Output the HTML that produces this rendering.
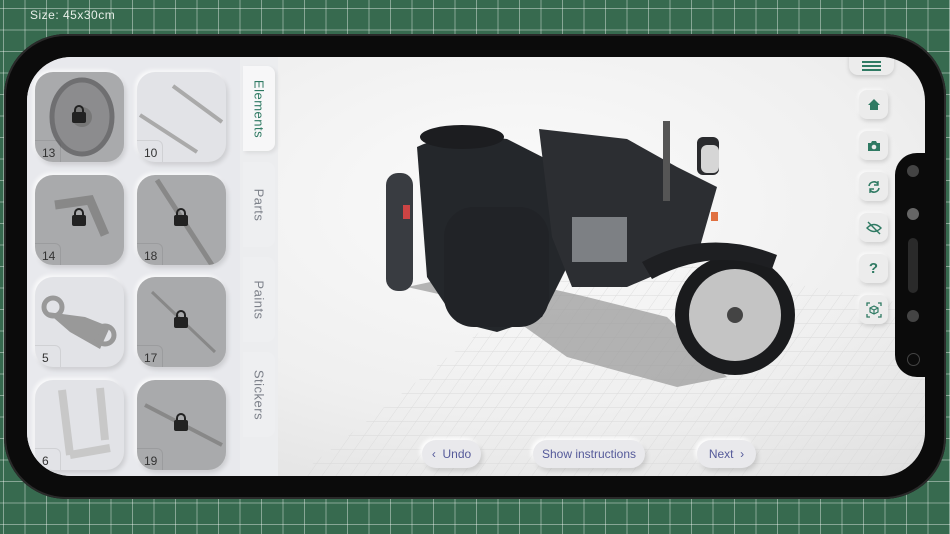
<!DOCTYPE html>
<html><head><style>
*{margin:0;padding:0;box-sizing:border-box}
body{width:950px;height:534px;overflow:hidden;position:relative;font-family:"Liberation Sans",sans-serif;
background-color:#376a4f;
background-image:linear-gradient(rgba(255,255,255,.4) 1px,transparent 1px),linear-gradient(90deg,rgba(255,255,255,.4) 1px,transparent 1px);
background-size:21.5px 21.5px;background-position:3px 8px}
.size{position:absolute;left:30px;top:8px;color:#e8efe9;font-size:12px;letter-spacing:.5px}
.phone{position:absolute;left:4px;top:34px;width:942px;height:465px;background:#0b0b0b;border-radius:62px;box-shadow:0 0 0 2px #2a2a2a inset}
.screen{position:absolute;left:27px;top:57px;width:898px;height:419px;border-radius:44px;overflow:hidden;
background:radial-gradient(ellipse at 55% 35%,#fbfbfb 0%,#efefef 55%,#dcdcdc 100%)}
.notch{position:absolute;left:895px;top:153px;width:40px;height:224px;background:#0b0b0b;border-radius:22px 0 0 22px}
.panel{position:absolute;left:0;top:0;width:213px;height:419px;background:#e8e9ed}
.tile{position:absolute;width:89px;height:90px;border-radius:18px;box-shadow:2px 3px 5px rgba(0,0,0,.12),-2px -2px 4px rgba(255,255,255,.8);overflow:hidden}
.lk{background:#a9aaac}.ul{background:#e2e3e7}
.tile svg{position:absolute;left:0;top:0}
.tile span{position:absolute;left:0;bottom:0;width:26px;height:22px;border-top:1px solid rgba(0,0,0,.08);border-right:1px solid rgba(0,0,0,.08);border-radius:0 6px 0 18px;font-size:12px;color:#333;padding:5px 0 0 7px}
.lock{position:absolute;left:37px;top:40px;width:14px;height:11px;background:#222;border-radius:2px}
.lock:before{content:"";position:absolute;left:2px;top:-7px;width:6px;height:7px;border:2px solid #222;border-bottom:none;border-radius:5px 5px 0 0}
.tabs{position:absolute;left:213px;top:0;width:38px;height:419px;background:#ecedef}
.tab{position:absolute;left:3px;width:32px;border-radius:0 8px 8px 0;background:#eeeff1}
.tab div{position:absolute;left:50%;top:50%;transform:translate(-50%,-50%) rotate(90deg);white-space:nowrap;font-size:13px;color:#7d818a;letter-spacing:.5px}
.rb{position:absolute;left:832px;width:29px;height:29px;border-radius:8px;background:#ececec;box-shadow:1px 2px 4px rgba(0,0,0,.15),-1px -1px 3px #fff;display:flex;align-items:center;justify-content:center;color:#2f7a63;font-weight:bold;font-size:15px}
.bb{position:absolute;top:383px;height:28px;border-radius:14px;background:#e9e9ec;box-shadow:2px 3px 5px rgba(0,0,0,.13),-2px -2px 4px #fff;font-size:12px;color:#555a9a;display:flex;align-items:center;justify-content:center}
</style></head><body>
<div class="size">Size: 45x30cm</div>
<div class="phone"></div>
<div class="screen">
<svg style="position:absolute;left:0;top:0" width="898" height="419">
<defs><pattern id="g" width="14" height="14" patternUnits="userSpaceOnUse" patternTransform="skewX(-35)"><path d="M0 0H14M0 0V14" stroke="#d6d6d6" stroke-width="1" fill="none"/></pattern></defs>
<polygon points="270,419 560,190 898,250 898,419" fill="url(#g)" opacity=".8"/>
<path d="M380 230 L470 250 L540 300 L650 330 L700 320 L640 260 L560 240 L450 215Z" fill="#9c9c9c" opacity=".75"/>
<path d="M390 90 Q420 75 480 82 L535 110 L545 200 L515 260 L470 275 L430 265 L400 220 Z" fill="#24272b"/>
<ellipse cx="435" cy="80" rx="42" ry="12" fill="#1c1d20"/>
<rect x="359" y="116" width="27" height="118" rx="12" fill="#393c41"/>
<rect x="417" y="150" width="105" height="120" rx="30" fill="#212327"/>
<path d="M512 72 L600 82 L650 110 L690 130 L670 200 L600 230 L545 230 L525 180 Z" fill="#2c2e32"/>
<rect x="545" y="160" width="55" height="45" fill="#7d8084"/>
<circle cx="708" cy="258" r="60" fill="#1a1b1d"/><circle cx="708" cy="258" r="46" fill="#c4c4c4"/><circle cx="708" cy="258" r="8" fill="#444"/>
<path d="M615 205 Q680 170 750 198 L745 212 Q685 190 625 222Z" fill="#1e1f22"/>
<rect x="636" y="64" width="7" height="80" fill="#555"/>
<rect x="670" y="80" width="22" height="38" rx="6" fill="#2a2b2e"/>
<rect x="674" y="88" width="18" height="28" rx="6" fill="#d6d6d6"/>
<rect x="376" y="148" width="7" height="14" fill="#c44"/><rect x="684" y="155" width="7" height="9" fill="#e07040"/>
</svg>
<div class="panel">
<div class="tile lk" style="left:8px;top:15px"><svg width="89" height="90"><ellipse cx="47" cy="45" rx="30" ry="37" fill="#8c8c8e" stroke="#6f6f71" stroke-width="5"/><circle cx="47" cy="45" r="10" fill="#777"/></svg><div class="lock"></div><span>13</span></div>
<div class="tile ul" style="left:110px;top:15px"><svg width="89" height="90"><path d="M3 43L60 80M36 14L85 50" stroke="#aaa" stroke-width="4" fill="none"/></svg><span>10</span></div>
<div class="tile lk" style="left:8px;top:118px"><svg width="89" height="90"><path d="M20 30L55 25L70 60" stroke="#888" stroke-width="9" fill="none"/></svg><div class="lock"></div><span>14</span></div>
<div class="tile lk" style="left:110px;top:118px"><svg width="89" height="90"><path d="M20 5L75 90" stroke="#888" stroke-width="5"/></svg><div class="lock"></div><span>18</span></div>
<div class="tile ul" style="left:8px;top:220px"><svg width="89" height="90"><path d="M12 35L50 40L75 50L65 72L35 55Z" fill="#999"/><circle cx="18" cy="30" r="9" fill="none" stroke="#999" stroke-width="5"/><circle cx="70" cy="58" r="9" fill="none" stroke="#999" stroke-width="5"/></svg><span>5</span></div>
<div class="tile lk" style="left:110px;top:220px"><svg width="89" height="90"><path d="M15 15L78 75" stroke="#888" stroke-width="3"/></svg><div class="lock"></div><span>17</span></div>
<div class="tile ul" style="left:8px;top:323px"><svg width="89" height="90"><path d="M27 10L35 75M65 8L70 60M35 75L75 68" stroke="#c8c8c8" stroke-width="8" fill="none"/></svg><span>6</span></div>
<div class="tile lk" style="left:110px;top:323px"><svg width="89" height="90"><path d="M8 25L85 65" stroke="#888" stroke-width="4"/></svg><div class="lock"></div><span>19</span></div>
</div>
<div class="tabs">
<div class="tab" style="top:9px;height:85px;background:#f7f7f8;box-shadow:2px 2px 4px rgba(0,0,0,.08)"><div style="color:#2f7a63">Elements</div></div>
<div class="tab" style="top:105px;height:85px"><div>Parts</div></div>
<div class="tab" style="top:200px;height:85px"><div>Paints</div></div>
<div class="tab" style="top:295px;height:85px"><div>Stickers</div></div>
</div>
<div style="position:absolute;left:822px;top:-4px;width:45px;height:22px;border-radius:0 0 9px 9px;background:#ececec;box-shadow:0 2px 4px rgba(0,0,0,.15)">
<div style="position:absolute;left:13px;top:8px;width:19px;height:2px;background:#2f7a63;box-shadow:0 4px 0 #2f7a63,0 8px 0 #2f7a63"></div></div>
<div class="rb" style="top:33px"><svg width="14" height="13"><path d="M7 1L1 7H3V12H11V7H13Z" fill="#2f7a63"/></svg></div>
<div class="rb" style="top:74px"><svg width="14" height="12"><path d="M1 3H4L5 1H9L10 3H13V11H1Z" fill="#2f7a63"/><circle cx="7" cy="7" r="2.3" fill="#ececec"/></svg></div>
<div class="rb" style="top:115px"><svg width="14" height="14"><path d="M2 6A5 5 0 0 1 11 4M12 8A5 5 0 0 1 3 10" stroke="#2f7a63" stroke-width="1.6" fill="none"/><path d="M11 1V5H7M3 13V9H7" stroke="#2f7a63" stroke-width="1.4" fill="none"/></svg></div>
<div class="rb" style="top:156px"><svg width="16" height="14"><path d="M1 7Q8 0 15 7Q8 14 1 7Z" stroke="#2f7a63" stroke-width="1.4" fill="none"/><path d="M2 1L14 13" stroke="#2f7a63" stroke-width="1.4"/></svg></div>
<div class="rb" style="top:197px">?</div>
<div class="rb" style="top:238px"><svg width="16" height="16"><path d="M1 4V1H4M12 1H15V4M15 12V15H12M4 15H1V12" stroke="#2f7a63" stroke-width="1.3" fill="none"/><path d="M8 4L12 6V10L8 12L4 10V6Z M4 6L8 8L12 6M8 8V12" stroke="#2f7a63" stroke-width="1.2" fill="none"/></svg></div>
<div class="bb" style="left:395px;width:59px">‹&nbsp; Undo</div>
<div class="bb" style="left:506px;width:112px">Show instructions</div>
<div class="bb" style="left:670px;width:59px">Next &nbsp;›</div>
</div>
<div class="notch"><div style="position:absolute;left:12px;top:12px;width:12px;height:12px;border-radius:50%;background:#444"></div>
<div style="position:absolute;left:12px;top:55px;width:12px;height:12px;border-radius:50%;background:#666"></div>
<div style="position:absolute;left:13px;top:85px;width:10px;height:55px;border-radius:5px;background:#2a2a2a"></div>
<div style="position:absolute;left:12px;top:157px;width:12px;height:12px;border-radius:50%;background:#444"></div>
<div style="position:absolute;left:12px;top:200px;width:13px;height:13px;border-radius:50%;border:1px solid #444"></div></div>
</body></html>
